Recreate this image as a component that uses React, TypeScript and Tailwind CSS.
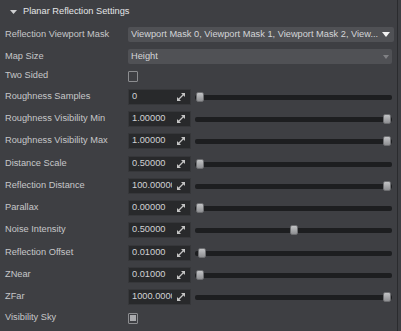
import React from "react";

const font = "font-['Liberation_Sans',Arial,sans-serif]";

function Label({ children }: { children: React.ReactNode }) {
  return (
    <div className="w-[128px] shrink-0 pl-[5px] text-[#c6c7c9] whitespace-nowrap leading-none">
      {children}
    </div>
  );
}

function SpinIcon() {
  return (
    <svg width="8" height="8" viewBox="0 0 8 8" className="shrink-0">
      <polygon points="4,0 8,0 8,4" fill="#c4c4c4" />
      <polygon points="0,4 0,8 4,8" fill="#c4c4c4" />
      <line x1="1.5" y1="6.5" x2="6.5" y2="1.5" stroke="#c4c4c4" strokeWidth="1.2" />
    </svg>
  );
}

function Slider({ frac }: { frac: number }) {
  const left = 1 + frac * 187;
  return (
    <div className="relative flex-1 h-[16px] ml-[4px] flex items-center">
      <div className="w-full h-[5px] rounded-[2px] bg-[#1d1e20]" />
      <div
        className="absolute top-[3px] w-[8px] h-[10px] rounded-[2px] border border-[#6c6d70] bg-gradient-to-b from-[#c2c3c5] to-[#8e8f92]"
        style={{ left: `${left}px` }}
      />
    </div>
  );
}

function NumRow({ label, value, frac, extra }: { label: string; value: string; frac: number; extra?: boolean }) {
  return (
    <div className={`flex items-center h-[16px] ${extra ? "mt-[7px]" : "mt-[6px]"}`}>
      <Label>{label}</Label>
      <div className="w-[63px] h-[16px] shrink-0 bg-[#28292b] border border-[#36373a] flex items-center pl-[3px] pr-[5px]">
        <div className="w-[40px] overflow-hidden whitespace-nowrap text-[#d0d1d4] leading-none">{value}</div>
        <div className="flex-1" />
        <SpinIcon />
      </div>
      <Slider frac={frac} />
    </div>
  );
}

function CheckRow({ label, checked, top }: { label: string; checked?: boolean; top: string }) {
  return (
    <div className={`flex items-center h-[12px] ${top}`}>
      <Label>{label}</Label>
      <div className="w-[10px] h-[11px] border border-[#8c8d90] rounded-[1px] flex items-center justify-center">
        {checked && <div className="w-[6px] h-[6px] bg-[#a9aaad]" />}
      </div>
    </div>
  );
}

export default function App() {
  const rows: { label: string; value: string; frac: number; extra?: boolean }[] = [
    { label: "Roughness Samples", value: "0", frac: 0, extra: true },
    { label: "Roughness Visibility Min", value: "1.00000", frac: 1 },
    { label: "Roughness Visibility Max", value: "1.00000", frac: 1 },
    { label: "Distance Scale", value: "0.50000", frac: 0, extra: true },
    { label: "Reflection Distance", value: "100.000000", frac: 1 },
    { label: "Parallax", value: "0.00000", frac: 0 },
    { label: "Noise Intensity", value: "0.50000", frac: 0.5 },
    { label: "Reflection Offset", value: "0.01000", frac: 0.01, extra: true },
    { label: "ZNear", value: "0.01000", frac: 0 },
    { label: "ZFar", value: "1000.000000", frac: 1 },
  ];
  return (
    <div className={`w-[401px] h-[331px] bg-[#3e3f43] flex overflow-hidden text-[9.25px] ${font}`}>
      <div className="w-[397px] flex flex-col">
        <div className="h-[22px] flex items-center pl-[10px] pt-[2px]">
          <svg width="7" height="4" viewBox="0 0 7 4" className="-mt-[1px]">
            <polygon points="0,0 7,0 3.5,4" fill="#cfd0d2" />
          </svg>
          <span className="ml-[6px] text-[#e4e5e7] leading-none">Planar Reflection Settings</span>
        </div>
        <div className="flex flex-col pr-[5px] pt-[5px]">
          <div className="flex items-center h-[15px]">
            <Label>Reflection Viewport Mask</Label>
            <div className="flex-1 h-[15px] rounded-[2px] bg-[#505155] flex items-center pl-[3px] pr-[4px]">
              <span className="flex-1 whitespace-nowrap overflow-hidden text-[#d4d5d8] leading-none">
                Viewport Mask 0, Viewport Mask 1, Viewport Mask 2, View...
              </span>
              <svg width="8" height="5" viewBox="0 0 8 5" className="ml-[4px]">
                <polygon points="0,0 8,0 4,5" fill="#f2f2f2" />
              </svg>
            </div>
          </div>
          <div className="flex items-center h-[15px] mt-[7px]">
            <Label>Map Size</Label>
            <div className="flex-1 h-[15px] rounded-[2px] bg-[#505155] flex items-center pl-[3px] pr-[3px]">
              <span className="flex-1 text-[#d4d5d8] leading-none">Height</span>
              <svg width="6" height="4" viewBox="0 0 6 4">
                <polygon points="0,0 6,0 3,4" fill="#808184" />
              </svg>
            </div>
          </div>
          <CheckRow label="Two Sided" top="mt-[6px]" />
          {rows.map((r) => (
            <NumRow key={r.label} {...r} />
          ))}
          <CheckRow label="Visibility Sky" checked top="mt-[7px]" />
        </div>
      </div>
      <div className="w-[1px] bg-[#2a2b2e]" />
      <div className="flex-1 bg-[#3e3f43]" />
    </div>
  );
}
